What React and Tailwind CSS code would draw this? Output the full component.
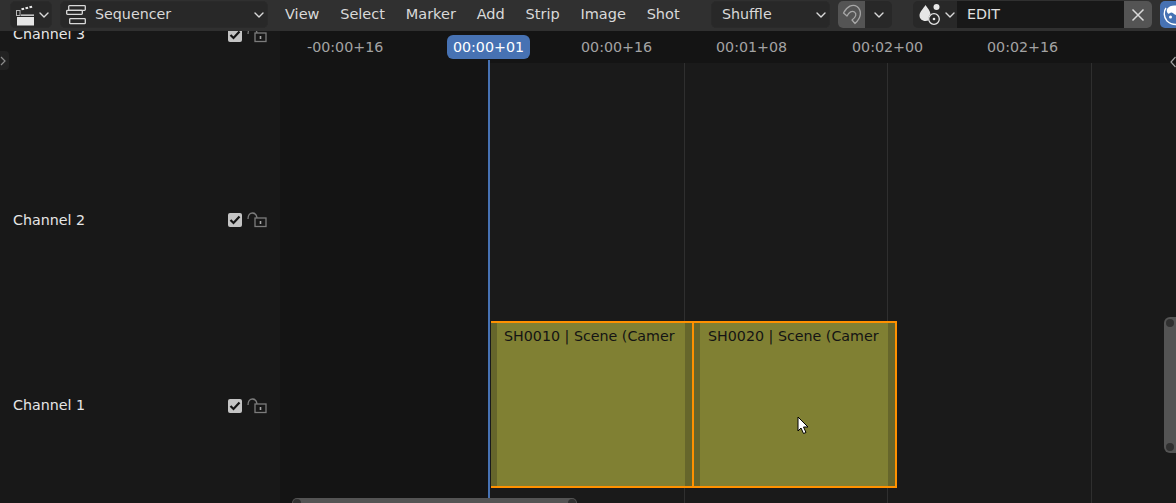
import React from 'react';

const Chevron = ({ className = '' }) => (
  <svg width="10" height="6" viewBox="0 0 10 6" fill="none" className={className}>
    <path d="M1 1l4 4 4-4" stroke="#d9d9d9" strokeWidth="1.4" strokeLinecap="round" strokeLinejoin="round" />
  </svg>
);

const ClapperIcon = () => (
  <svg width="19" height="22" viewBox="0 0 19 22" fill="none">
    <rect x="0.500" y="6.500" width="3.500" height="5" stroke="#b5b5b5" strokeWidth="1" />
    <path d="M5.500 5.300l2.600-.6M9.500 4.300l2.600-.6M13.500 3.300l2.600-.6" stroke="#e6e6e6" strokeWidth="2.200" />
    <rect x="5" y="10.500" width="13" height="1.300" fill="#e6e6e6" />
    <rect x="1" y="13" width="17" height="8.500" fill="#e6e6e6" />
  </svg>
);

const SequencerIcon = () => (
  <svg width="20" height="20" viewBox="0 0 20 20" fill="none" stroke="#d9d9d9" strokeWidth="1.300">
    <rect x="2.700" y="0.700" width="16.600" height="4.600" rx="0.800" />
    <rect x="0.700" y="5.300" width="15.600" height="4" rx="0.800" fill="#282828" />
    <rect x="3.700" y="13.700" width="15.600" height="5" rx="0.800" />
  </svg>
);

const SnapIcon = () => (
  <svg width="22" height="23" viewBox="0 0 22 23" fill="none">
    <path d="M2.500 10L6 13C8 9 11 7.500 13.500 9C16 11 15 14 11 17L14 20.500C20 15 21.500 8 16 3.500C11.500 0.500 6 3.500 2.500 10Z" stroke="#a6a6a6" strokeWidth="1.300" strokeLinejoin="round" />
  </svg>
);

const OverlayIcon = () => (
  <svg width="24" height="24" viewBox="0 0 24 24" fill="none">
    <path d="M6.500 2c2 3 4.500 5.500 5 9-1.500 1.500-2.300 3.500-2 6.500-.8.300-2 .500-3 .500C3 18 .500 15.500.500 12.500.500 9 4 6 6.500 2z" fill="#e6e6e6" />
    <circle cx="17.500" cy="4" r="3" fill="#e6e6e6" />
    <circle cx="15" cy="16" r="5.300" stroke="#e6e6e6" strokeWidth="1.300" />
    <circle cx="15" cy="16" r="1.300" fill="#e6e6e6" />
  </svg>
);

const LockIcon = () => (
  <svg width="20" height="16" viewBox="0 0 20 16" fill="none" stroke="#7c7c7c" strokeWidth="1.300">
    <path d="M1 7C1 3 3 1 5.500 1S9.500 2.500 10 6" />
    <rect x="8" y="6" width="11" height="8.500" />
    <path d="M13.500 9v3" stroke="#a8a8a8" strokeWidth="1.600" />
  </svg>
);

const Check = () => (
  <span className="flex h-[14px] w-[14px] items-center justify-center rounded-[2px] bg-[#c4c4c4]">
    <svg width="12" height="10" viewBox="0 0 12 10" fill="none">
      <path d="M1.500 5l3 3 6-6.500" stroke="#141414" strokeWidth="2.200" />
    </svg>
  </span>
);

const Dropdown = ({ children, className = '' }) => (
  <div className={`flex h-[27px] items-center rounded-[5px] border border-[#2a2a2a] bg-[#282828] ${className}`}>
    {children}
  </div>
);

const menus = ['View', 'Select', 'Marker', 'Add', 'Strip', 'Image', 'Shot'];
const channels = ['Channel 3', 'Channel 2', 'Channel 1'];
const ticks = [
  { label: '-00:00+16', x: 307 },
  { label: '00:00+16', x: 581 },
  { label: '00:01+08', x: 716 },
  { label: '00:02+00', x: 852 },
  { label: '00:02+16', x: 987 },
];
const gridLines = [684, 887, 1091];

const Strip = ({ name, textClass }) => (
  <div className="relative flex h-full w-[201px] shrink-0 justify-between border-y-[2px] border-[#ff9100] bg-[#808033]">
    <div className="h-full w-[6px] bg-[#66662b]" />
    <span className={`absolute top-[3px] leading-[20px] text-[#141414] ${textClass}`}>{name}</span>
    <div className="h-full w-[7px] bg-[#66662b]" />
  </div>
);

const App = () => (
  <div className="relative flex h-[503px] w-[1176px] flex-col overflow-hidden bg-[#1a1a1a] font-['DejaVu_Sans',sans-serif] text-[14.250px]">
    {/* Header */}
    <header className="relative z-20 flex h-[31px] shrink-0 items-start overflow-hidden bg-[#303030] pl-[10px] pt-[1px] text-[#d9d9d9]">
      <Dropdown className="w-[42px] shrink-0 gap-[4px] pl-[5px]">
        <ClapperIcon />
        <Chevron />
      </Dropdown>
      <Dropdown className="ml-[8px] w-[208px] shrink-0 pl-[5px]">
        <SequencerIcon />
        <span className="ml-[9px] flex-1">Sequencer</span>
        <Chevron className="mr-[3px]" />
      </Dropdown>
      <nav className="ml-[17px] flex h-[27px] w-[395px] shrink-0 items-center gap-[20.800px] text-[14.500px]">
        {menus.map((m) => (
          <span key={m}>{m}</span>
        ))}
      </nav>
      <Dropdown className="ml-[31px] w-[119px] shrink-0 pl-[10px]">
        <span className="flex-1">Shuffle</span>
        <Chevron className="mr-[3px]" />
      </Dropdown>
      <div className="ml-[8px] flex h-[27px] w-[54px] shrink-0 overflow-hidden rounded-[5px] bg-[#282828]">
        <div className="flex w-[27px] items-center justify-center bg-[#545454]">
          <SnapIcon />
        </div>
        <div className="flex flex-1 items-center justify-center">
          <Chevron />
        </div>
      </div>
      <div className="ml-[21px] flex h-[27px] w-[239px] shrink-0 overflow-hidden rounded-[5px] bg-[#282828]">
        <div className="flex w-[44px] items-center pl-[6px]">
          <OverlayIcon />
          <Chevron className="ml-[2px]" />
        </div>
        <div className="flex-1 bg-[#181818] pl-[10px] leading-[27px] text-[#e0e0e0]">EDIT</div>
        <div className="flex w-[28px] items-center justify-center bg-[#545454]">
          <svg width="14" height="14" viewBox="0 0 14 14" fill="none">
            <path d="M1.500 1.500l11 11M12.500 1.500l-11 11" stroke="#d9d9d9" strokeWidth="1.500" />
          </svg>
        </div>
      </div>
      <div className="ml-[8px] h-[27px] w-[30px] shrink-0 rounded-l-[5px] bg-[#4772b3]">
        <svg width="16" height="27" viewBox="0 0 16 27" fill="none">
          <path d="M6 7C3.500 10 3.500 16 7 20c2.500 2.500 6 3.500 9 3.500" stroke="#ffffff" strokeWidth="1.400" />
          <path d="M7 8C9 5 12.500 4 16 4.500V14c-2 0-2.500-2.500-4.500-2.500S9 13.500 8 12.500C6.800 11.500 6.500 9.500 7 8z" fill="#ffffff" />
          <circle cx="10.500" cy="16" r="1.500" fill="#ffffff" />
        </svg>
      </div>
    </header>

    <div className="relative flex min-h-0 flex-1">
      {/* Channel list */}
      <aside className="z-10 -mt-[89px] w-[280px] shrink-0 bg-[#181818] text-[#e6e6e6]">
        {channels.map((c) => (
          <div key={c} className="flex h-[185.500px] items-center pl-[13px] pr-[13px]">
            <span className="flex-1">{c}</span>
            <Check />
            <span className="ml-[5px]">
              <LockIcon />
            </span>
          </div>
        ))}
      </aside>

      {/* Timeline */}
      <main className="relative flex-1 bg-[#1a1a1a]">
        <div className="absolute inset-y-0 left-0 w-[209px] bg-[#141414]" />
        <div className="relative z-10 h-[32px] bg-[#141414] text-[#a3a3a3]">
          {ticks.map((t) => (
            <span key={t.label} className="absolute top-[6px] leading-[20px]" style={{ left: t.x - 280 }}>
              {t.label}
            </span>
          ))}
          <span className="absolute left-[167px] top-[4px] h-[24px] w-[83px] rounded-[6px] bg-[#4772b3] text-center leading-[24px] text-white">
            00:00+01
          </span>
        </div>

        {gridLines.map((x) => (
          <div key={x} className="absolute bottom-0 top-[32px] w-px bg-[#2f2f2f]" style={{ left: x - 280 }} />
        ))}

        {/* Strips */}
        <div className="absolute left-[211px] top-[290px] flex h-[167px]">
          <Strip name="SH0010 | Scene (Camer" textClass="left-[13px]" />
          <div className="w-[2px] bg-[#ff9100]" />
          <Strip name="SH0020 | Scene (Camer" textClass="left-[14px]" />
          <div className="w-[2px] bg-[#ff9100]" />
        </div>

        {/* Playhead */}
        <div className="absolute bottom-[5px] left-[208px] top-[29px] z-10 w-[2px] bg-[#4772b3]" />

        {/* Mouse cursor */}
        <svg className="absolute left-[517px] top-[385px] z-10" width="13" height="19" viewBox="0 0 13 19">
          <path d="M1 1v14l3-3 2.500 5.500 2.500-1-2.500-5.500H11z" fill="#ffffff" stroke="#000000" strokeWidth="1" />
        </svg>

        {/* Scrollbars */}
        <div className="absolute bottom-0 left-[12px] h-[5px] w-[285px] overflow-hidden rounded-t-[5px] bg-[#545454]">
          <div className="absolute left-[1px] top-[1px] h-[8px] w-[8px] rounded-full bg-[#303030]" />
          <div className="absolute right-[1px] top-[1px] h-[8px] w-[8px] rounded-full bg-[#303030]" />
        </div>
        <div className="absolute right-0 top-[286px] h-[136px] w-[12px] overflow-hidden rounded-l-[6px] bg-[#545454]">
          <div className="absolute left-[2px] top-[2px] h-[8px] w-[8px] rounded-full bg-[#303030]" />
          <div className="absolute bottom-[2px] left-[2px] h-[8px] w-[8px] rounded-full bg-[#303030]" />
        </div>
        <svg className="absolute right-0 top-[25px] z-10" width="6" height="12" viewBox="0 0 6 12" fill="none">
          <path d="M5.500 1L1 6l4.500 5" stroke="#a0a0a0" strokeWidth="1.200" />
        </svg>
      </main>

      {/* Region toggle */}
      <div className="absolute left-0 top-[20px] z-10 flex h-[19px] w-[9px] items-center rounded-r-[4px] bg-[#222222]">
        <svg width="6" height="10" viewBox="0 0 6 10" fill="none">
          <path d="M1 1l4 4-4 4" stroke="#8c8c8c" strokeWidth="1.200" />
        </svg>
      </div>
    </div>
  </div>
);

export default App;
